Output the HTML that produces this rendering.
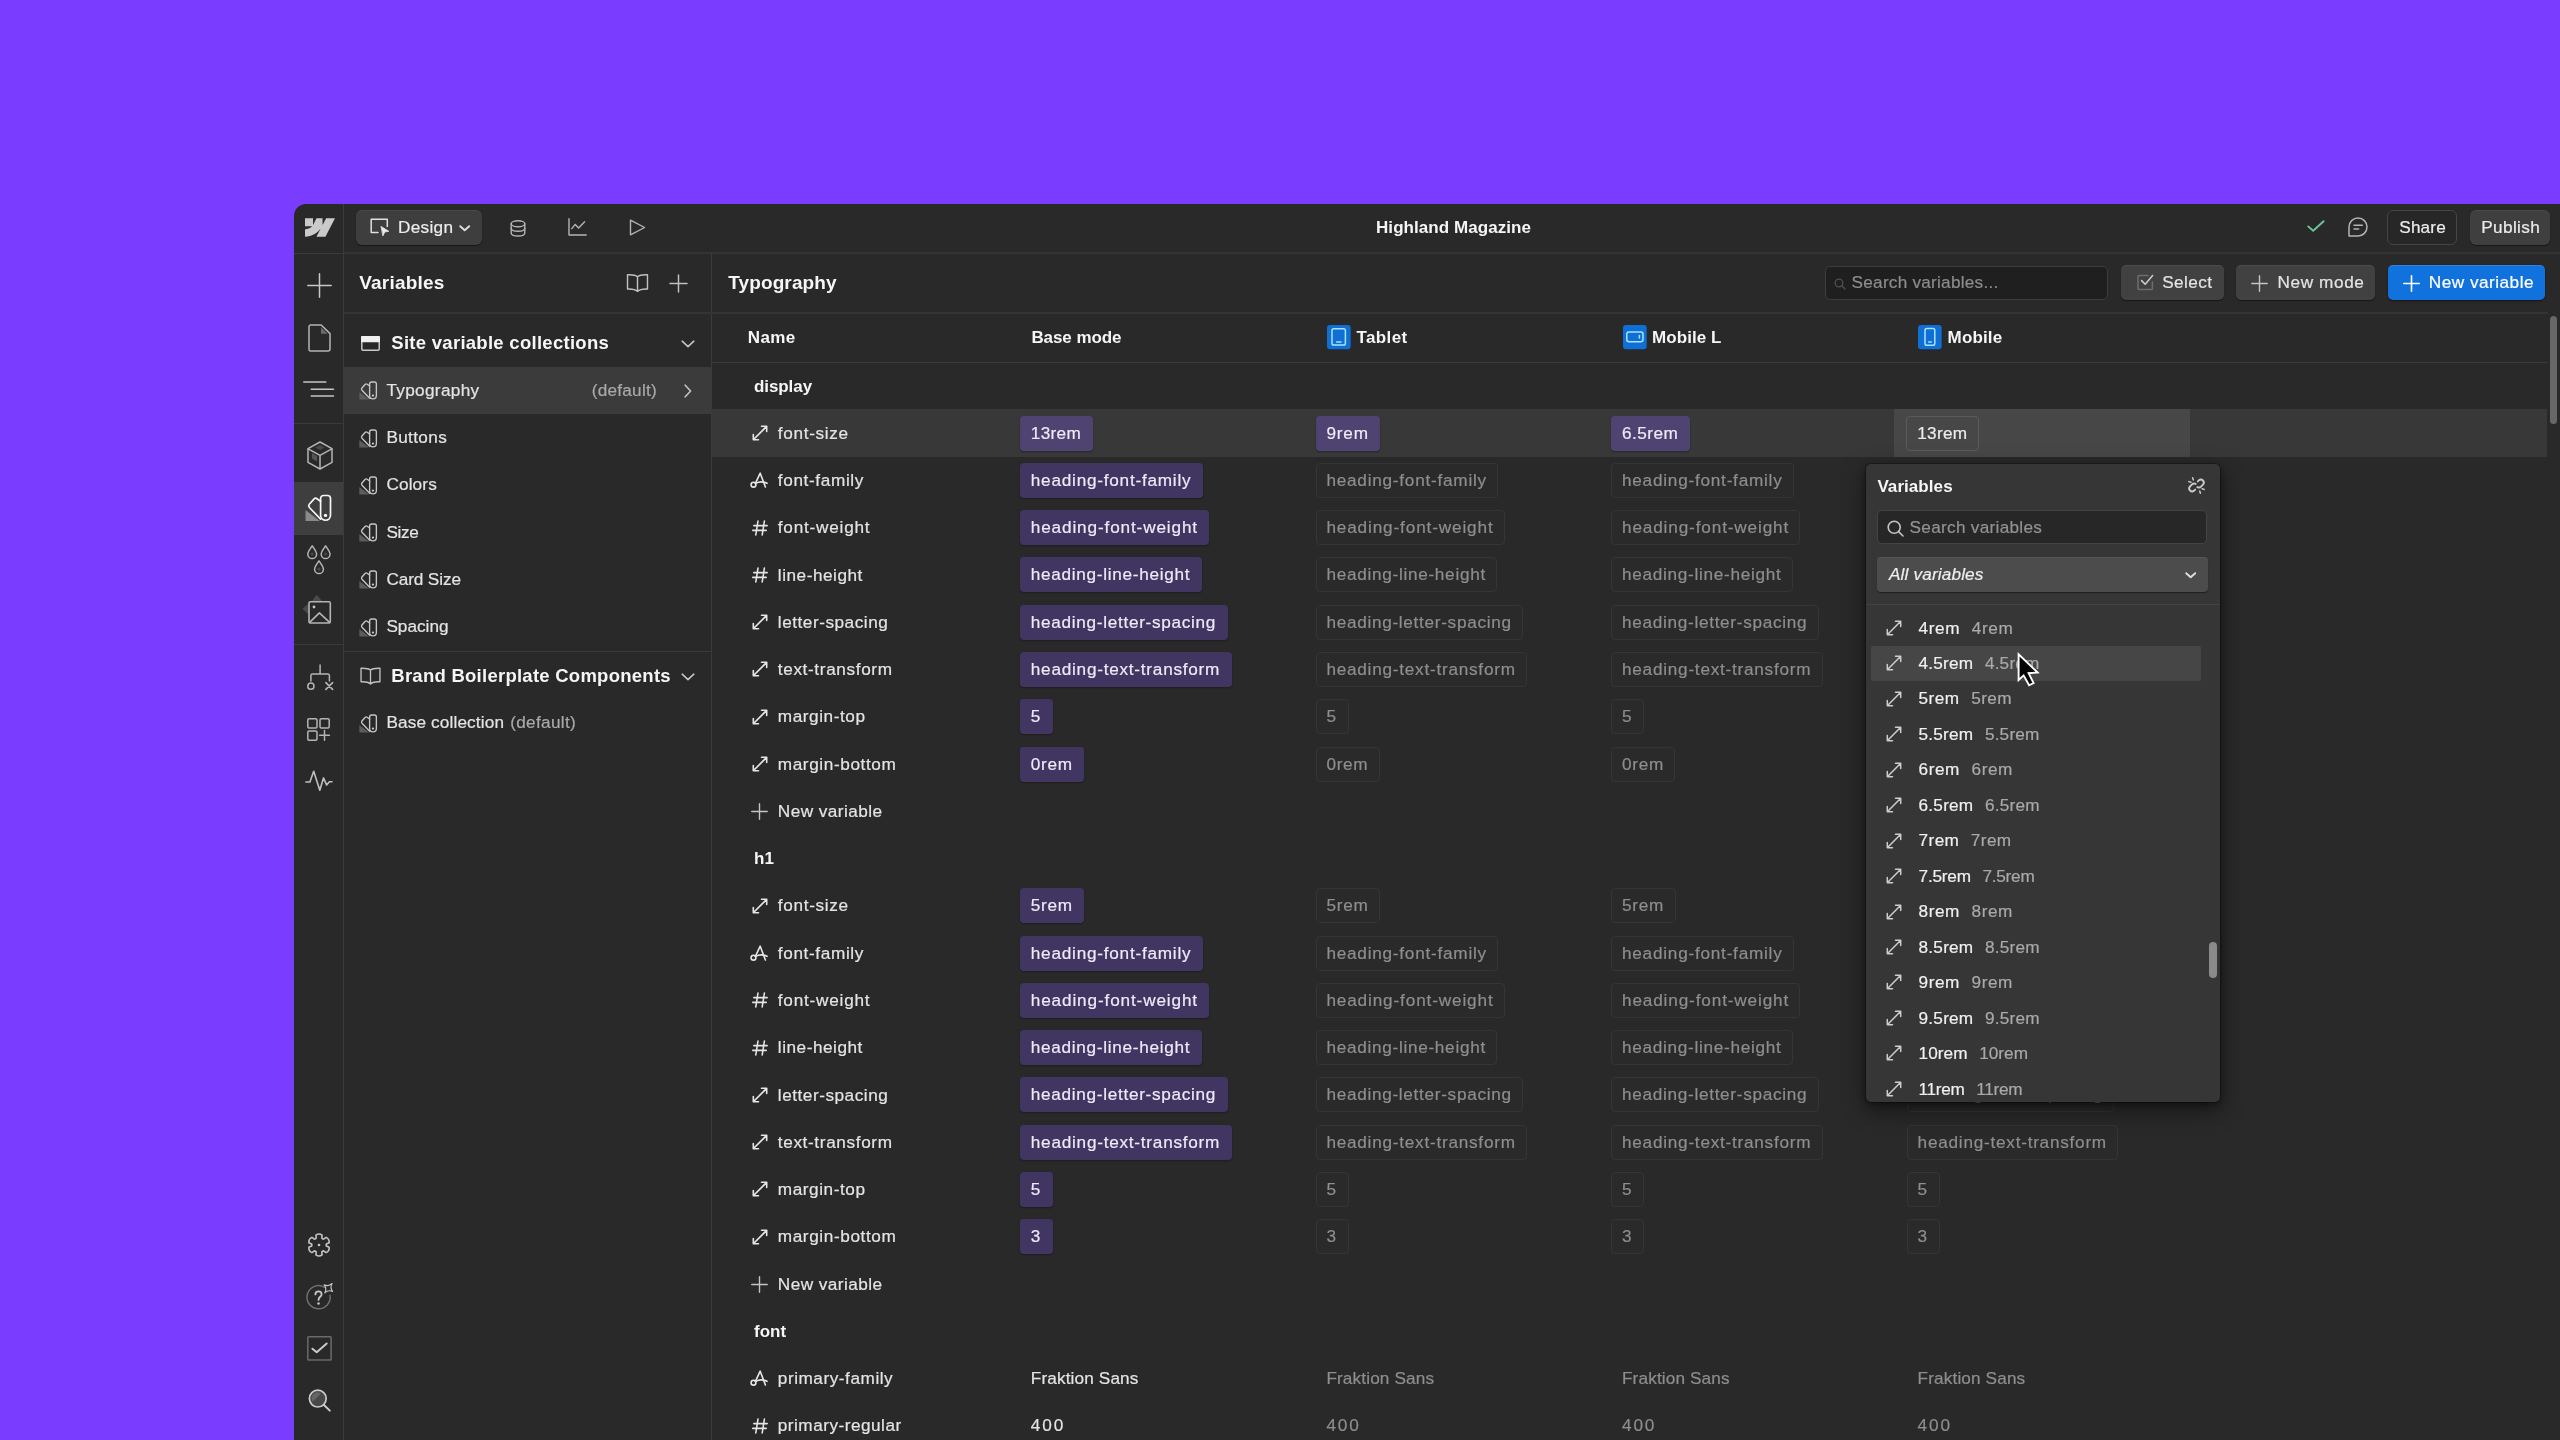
<!DOCTYPE html>
<html lang="en"><head><meta charset="utf-8"><title>Highland Magazine - Variables</title>
<style>
html,body{margin:0;padding:0;}
body{width:2560px;height:1440px;overflow:hidden;background:#7a3dff;font-family:"Liberation Sans",sans-serif;}
#app{position:absolute;left:0;top:0;width:2560px;height:1440px;overflow:hidden;will-change:transform;}
#win{position:absolute;left:294px;top:204px;width:2266px;height:1236px;background:#292929;border-top-left-radius:12px;}
.t{position:absolute;height:30px;line-height:30px;white-space:nowrap;color:#e4e4e4;font-size:17.2px;letter-spacing:.3px;-webkit-text-stroke:.2px currentColor;}
.b{font-weight:bold;color:#f6f6f6;letter-spacing:0;font-size:17px;-webkit-text-stroke:0;}
.h1{font-size:19px;}
.h2{font-size:18.5px;}
.dim{color:#a9a9a9;}
.ic{position:absolute;}
.ic svg{display:block;width:100%;height:100%;overflow:visible;}
.hl{position:absolute;background:#3b3b3b;height:1px;}
.vl{position:absolute;background:#3b3b3b;width:1px;}
.chip,.ghost,.plain{position:absolute;height:35px;line-height:34.6px;border-radius:4px;font-size:17.2px;-webkit-text-stroke:.2px currentColor;white-space:nowrap;box-sizing:border-box;padding-left:10.8px;letter-spacing:.5px;}
.chip{background:#413662;color:#efeaf9;box-shadow:0 1px 2px rgba(0,0,0,.3);}
.chip.hot{background:#4f4471;}
.ghost{border:1px solid #353535;line-height:32.6px;padding-left:9.8px;color:#8e8e8e;background:#2a2a2a;}
.plain{color:#e4e4e4;}
.plain.dimv{color:#8e8e8e;}
.btn{position:absolute;box-sizing:border-box;border-radius:5px;background:#414141;box-shadow:0 1px 1px rgba(0,0,0,.45), inset 0 1px 0 rgba(255,255,255,.06);}
.pv{margin-left:11.6px;}

</style></head><body>
<div id="app">
<div id="win"></div>
<div class="hl" style="position:absolute;left:344.0px;top:252.0px;width:2216.0px;height:2.0px;background:#343434;"></div>
<div class="hl" style="position:absolute;left:294.0px;top:253.0px;width:50.0px;height:1.0px;"></div>
<div class="vl" style="position:absolute;left:343.0px;top:204.0px;width:1.0px;height:1236.0px;"></div>
<div class="vl" style="position:absolute;left:711.0px;top:253.0px;width:1.0px;height:1187.0px;"></div>
<div class="hl" style="position:absolute;left:344.0px;top:312.0px;width:2204.0px;height:2.0px;background:#343434;"></div>
<div class="hl" style="position:absolute;left:712.0px;top:362.0px;width:1835.0px;height:1.0px;"></div>
<div class="hl" style="position:absolute;left:294.0px;top:423.0px;width:49.0px;height:1.0px;"></div>
<div class="hl" style="position:absolute;left:294.0px;top:644.0px;width:49.0px;height:1.0px;"></div>
<div class="hl" style="position:absolute;left:344.0px;top:650.5px;width:367.0px;height:1.0px;"></div>
<div class="ic" style="left:305.0px;top:218.0px;width:30px;height:19px;"><svg viewBox="0 0 1080 674"><path fill="#cacaca" d="M1080 0L735.386 673.684H411.695L555.916 394.481H549.445C430.464 548.934 252.942 650.61 0 673.684V398.344C0 398.344 161.813 388.787 256.938 288.776H0V0.005H288.771V237.515L295.252 237.488L413.254 0.005H631.644V236.009L638.125 235.999L760.555 0H1080Z"/></svg></div>
<div class="btn" style="position:absolute;left:356.0px;top:210.0px;width:126.0px;height:35.0px;background:#3e3e3e;border-radius:6px;"></div>
<div class="ic" style="left:370.0px;top:218.0px;width:20px;height:18px;"><svg viewBox="0 0 20 18" fill="none" stroke="#e0e0e0" stroke-width="1.5" stroke-linecap="round" stroke-linejoin="round"><path d="M8 14.5H1.2V1.2H17.3V8.5"/><path d="M11.3 8.6L18.8 13.3 14.8 14 13 17.6Z" fill="#e9e9e9" stroke="#e9e9e9" stroke-width="0.8"/></svg></div>
<div class="t " id="tDesign" style="left:398.0px;top:211.7px;letter-spacing:0.297px;color:#ececec;">Design</div>
<div class="ic" style="left:459.3px;top:225.3px;width:11.4px;height:6.6px;"><svg viewBox="0 0 11.4 6.6" fill="none" stroke="#dedede" stroke-width="1.9" stroke-linecap="round" stroke-linejoin="round"><path d="M1.2 1.2L5.7 5.2 10.2 1.2"/></svg></div>
<div class="ic" style="left:510.3px;top:219.7px;width:16px;height:17px;"><svg viewBox="0 0 16 17" fill="none" stroke="#b4b4b4" stroke-width="1.4" stroke-linecap="round" stroke-linejoin="round"><ellipse cx="8" cy="3.8" rx="6.8" ry="3"/><path d="M1.2 3.8V13c0 1.7 3 3 6.8 3s6.8-1.3 6.8-3V3.8"/><path d="M1.2 8.3c0 1.7 3 3 6.8 3s6.8-1.3 6.8-3"/><path d="M1.2 12c0 .3 0 .6 .2 .9M14.8 12c0 .3 0 .6-.2 .9" stroke="none"/></svg></div>
<div class="ic" style="left:567.5px;top:218.2px;width:19px;height:18px;"><svg viewBox="0 0 19 18" fill="none" stroke="#b4b4b4" stroke-width="1.4" stroke-linecap="round" stroke-linejoin="round"><path d="M1 .8V17H18.2"/><path d="M3.8 10.6L7.2 6.4 10.6 10 16.6 3.8"/></svg></div>
<div class="ic" style="left:628.8px;top:219.3px;width:17px;height:17px;"><svg viewBox="0 0 17 17" fill="none" stroke="#b4b4b4" stroke-width="1.4" stroke-linecap="round" stroke-linejoin="round"><path d="M1.5 1.2L15.6 8.5 1.5 15.8Z"/></svg></div>
<div class="t b" id="tTitle" style="left:1376.0px;top:212.5px;letter-spacing:0.064px;">Highland Magazine</div>
<div class="ic" style="left:2307.4px;top:220.4px;width:18px;height:12px;"><svg viewBox="0 0 18 12" fill="none" stroke="#67c79a" stroke-width="1.9" stroke-linecap="round" stroke-linejoin="round"><path d="M1.2 6.4L6.2 10.8 16.6 1.2"/></svg></div>
<div class="ic" style="left:2347.6px;top:216.6px;width:20px;height:20px;"><svg viewBox="0 0 20 20" fill="none" stroke="#b4b4b4" stroke-width="1.5" stroke-linecap="round" stroke-linejoin="round"><path d="M1 19V10A9 9 0 1 1 10 19Z"/><path d="M6 8.2H14.4M6 12H10.6"/></svg></div>
<div class="" style="position:absolute;left:2387.0px;top:210.0px;width:70.0px;height:35.0px;box-sizing:border-box;border:1px solid #454545;border-radius:6px;background:#272727;"></div>
<div class="t " id="tShare" style="left:2399.3px;top:211.7px;letter-spacing:0.131px;color:#ececec;">Share</div>
<div class="btn" style="position:absolute;left:2470.0px;top:210.0px;width:80.0px;height:35.0px;border-radius:6px;background:#3f3f3f;"></div>
<div class="t " id="tPublish" style="left:2481.3px;top:211.7px;letter-spacing:0.354px;color:#ececec;">Publish</div>
<div class="ic" style="left:307.0px;top:273.0px;width:25px;height:25px;"><svg viewBox="0 0 25 25" fill="none" stroke="#c8c8c8" stroke-width="1.5" stroke-linecap="round" stroke-linejoin="round"><path d="M12.5 .8V24.2M.8 12.5H24.2"/></svg></div>
<div class="ic" style="left:308.0px;top:323.8px;width:23px;height:28px;"><svg viewBox="0 0 23 28" fill="none" stroke="#b4b4b4" stroke-width="1.5" stroke-linecap="round" stroke-linejoin="round"><path d="M2.6 1H13.2L22 9.6V25a2 2 0 0 1-2 2H2.6a1.6 1.6 0 0 1-1.6-1.6V2.6A1.6 1.6 0 0 1 2.6 1Z"/><path d="M13 3.2L19.6 9.8H13Z" fill="#6a6a6a" stroke="none"/></svg></div>
<div class="ic" style="left:303.3px;top:381.0px;width:32px;height:16px;"><svg viewBox="0 0 32 16" fill="none" stroke="#c4c4c4" stroke-width="1.5" stroke-linecap="round" stroke-linejoin="round"><path d="M.8 1H22.8M8.2 8.2H30.5M8.2 15H30.5"/></svg></div>
<div class="ic" style="left:306.5px;top:441.3px;width:26px;height:29px;"><svg viewBox="0 0 26 29" fill="none" stroke="#b4b4b4" stroke-width="1.5" stroke-linecap="round" stroke-linejoin="round"><path d="M13 1L25 7.6V21.4L13 28 1 21.4V7.6Z"/><path d="M1.2 7.8L13 14.4 24.8 7.8M13 14.4V27.8"/><path d="M5 12L10 15V20.5L5 17.6Z" fill="#555" stroke="none"/><path d="M8.2 6.6L13 4 17.6 6.6 13 9Z" fill="#4a4a4a" stroke="none"/></svg></div>
<div class="" style="position:absolute;left:294.0px;top:481.5px;width:49.0px;height:53.0px;background:#3e3e3e;"></div>
<div class="ic" style="left:304.5px;top:494.0px;width:27px;height:28px;"><svg viewBox="0 0 27 28" fill="none" stroke="#f6f6f6" stroke-width="1.7" stroke-linecap="round" stroke-linejoin="round"><path d="M.5 16L.5 27H14.8Z" fill="#8a8a8a" stroke="none"/><path d="M15.6 7.4L12 4.7Q10.3 3.5 8.9 5.1L4.3 10.3Q3 11.9 4.4 13.5L15.6 25.2"/><path d="M18.6 1.5H22.5A3 3 0 0 1 25.5 4.5V21.3A4.95 4.95 0 0 1 15.6 21.3V4.5A3 3 0 0 1 18.6 1.5Z"/><circle cx="20.5" cy="21.4" r="1.7" fill="#f6f6f6" stroke="none"/></svg></div>
<div class="ic" style="left:307.0px;top:545.3px;width:24px;height:29px;"><svg viewBox="0 0 24 29" fill="none" stroke="#b4b4b4" stroke-width="1.5" stroke-linecap="round" stroke-linejoin="round"><path d="M5.2 0.8C6.800000000000001 3.4 9.600000000000001 6.4 9.600000000000001 9.2A4.4 4.4 0 0 1 0.7999999999999998 9.2C0.7999999999999998 6.4 3.6 3.4 5.2 0.8Z"/><circle cx="5.2" cy="9" r="1.6" fill="#4a4a4a" stroke="none"/><path d="M18.6 0.8C20.200000000000003 3.4 23.0 6.4 23.0 9.2A4.4 4.4 0 0 1 14.200000000000001 9.2C14.200000000000001 6.4 17.0 3.4 18.6 0.8Z"/><circle cx="18.6" cy="9" r="1.6" fill="#4a4a4a" stroke="none"/><path d="M12.0 15.8C13.6 18.4 16.4 21.4 16.4 24.2A4.4 4.4 0 0 1 7.6 24.2C7.6 21.4 10.4 18.4 12.0 15.8Z"/><circle cx="12.0" cy="24" r="1.6" fill="#4a4a4a" stroke="none"/></svg></div>
<div class="ic" style="left:301.0px;top:594.0px;width:31px;height:30.5px;"><svg viewBox="0 0 31 30.5" fill="none" stroke="#b4b4b4" stroke-width="1.6" stroke-linecap="round" stroke-linejoin="round"><path d="M15.7 .7L21 7H11Z" fill="#4a4a4a" stroke="none"/><path d="M1.3 14.7L7 10V20Z" fill="#4a4a4a" stroke="none"/><rect x="8" y="7.7" width="21.3" height="21.3" rx="1.4" fill="#292929"/><circle cx="13" cy="13" r="1.4" fill="#c4c4c4" stroke="none"/><path d="M8.6 28.4L18.4 18.9 28.6 28.4"/></svg></div>
<div class="ic" style="left:305.5px;top:663.5px;width:28px;height:27px;"><svg viewBox="0 0 28 27" fill="none" stroke="#b4b4b4" stroke-width="1.5" stroke-linecap="round" stroke-linejoin="round"><path d="M14.1 .9V10.1M4.9 17V11.6A1.5 1.5 0 0 1 6.4 10.1H21.9A1.5 1.5 0 0 1 23.4 11.6V17"/><circle cx="4.9" cy="22.2" r="3.1"/><path d="M19.9 18.6L26.6 25.3M26.6 18.6L19.9 25.3" stroke-width="1.7"/></svg></div>
<div class="ic" style="left:306.6px;top:717.6px;width:23px;height:23px;"><svg viewBox="0 0 23 23" fill="none" stroke="#b4b4b4" stroke-width="1.5" stroke-linecap="round" stroke-linejoin="round"><rect x=".8" y=".8" width="9.2" height="9.2" rx="1.2"/><rect x="13" y=".8" width="9.2" height="9.2" rx="1.2"/><rect x=".8" y="13" width="9.2" height="9.2" rx="1.2"/><path d="M17.5 12.4V22.2M12.6 17.3H22.4"/></svg></div>
<div class="ic" style="left:305.0px;top:770.0px;width:28px;height:21.5px;"><svg viewBox="0 0 28 21.5" fill="none" stroke="#c0c0c0" stroke-width="1.6" stroke-linecap="round" stroke-linejoin="round"><path d="M.9 12H4.9L8.7 1.3 14.8 20.2 18.5 7.9 21.6 15 24.4 11.7H27"/></svg></div>
<div class="ic" style="left:307.0px;top:1232.2px;width:24px;height:26px;"><svg viewBox="0 0 24 26" fill="none" stroke="#c4c4c4" stroke-width="1.6" stroke-linecap="round" stroke-linejoin="round"><path d="M8.92 3.05Q12.00 0.90 15.08 3.05L14.79 6.09Q15.45 7.02 16.59 7.13L19.08 5.36Q22.48 6.95 22.16 10.69L19.38 11.96Q18.90 13.00 19.38 14.04L22.16 15.31Q22.48 19.05 19.08 20.64L16.59 18.87Q15.45 18.98 14.79 19.91L15.08 22.95Q12.00 25.10 8.92 22.95L9.21 19.91Q8.55 18.98 7.41 18.87L4.92 20.64Q1.52 19.05 1.84 15.31L4.62 14.04Q5.10 13.00 4.62 11.96L1.84 10.69Q1.52 6.95 4.92 5.36L7.41 7.13Q8.55 7.02 9.21 6.09Z"/><circle cx="12" cy="13" r="1.3" fill="#c4c4c4" stroke="none"/></svg></div>
<div class="ic" style="left:304.8px;top:1281.0px;width:31px;height:30px;"><svg viewBox="0 0 31 30" fill="none" stroke="#b4b4b4" stroke-width="1.5" stroke-linecap="round" stroke-linejoin="round"><path d="M19.6 6.3A11.6 11.6 0 1 0 25 14.2" stroke="#6e6e6e"/><path d="M23.4 1.2Q24 6 28.8 7.2Q24 8.4 23.4 13.2Q22.8 8.4 18 7.2Q22.8 6 23.4 1.2Z" fill="#292929" stroke="#c8c8c8" stroke-width="1.1" transform="rotate(38 23.4 7.2)"/><path d="M10.4 13.4C10.4 9.2 16.6 9.4 16.6 13.2 16.6 15.8 13.5 15.8 13.5 18.9" stroke="#c8c8c8" stroke-width="1.8"/><circle cx="13.5" cy="22.6" r="1.25" fill="#c8c8c8" stroke="none"/></svg></div>
<div class="ic" style="left:306.6px;top:1336.0px;width:25px;height:25px;"><svg viewBox="0 0 25 25" fill="none" stroke="#b4b4b4" stroke-width="1.5" stroke-linecap="round" stroke-linejoin="round"><rect x=".8" y=".8" width="23.3" height="23.3" rx=".8" stroke="#6a6a6a"/><path d="M5.4 12.7L9.7 16.3 19.7 7.5" stroke="#cdcdcd" stroke-width="1.9"/></svg></div>
<div class="ic" style="left:307.5px;top:1389.4px;width:24px;height:24px;"><svg viewBox="0 0 24 24" fill="none" stroke="#cccccc" stroke-width="1.7" stroke-linecap="round" stroke-linejoin="round"><circle cx="9.8" cy="9.6" r="8.4" fill="#484848"/><path d="M3.5 9.6A6.3 6.3 0 0 1 9.8 3.3L13 4.4 4.6 12.8Z" fill="#666" stroke="none"/><path d="M16 16L21.8 21.6" stroke-width="2"/></svg></div>
<div class="t b h1" id="tVars" style="left:359.2px;top:268.0px;letter-spacing:0.206px;">Variables</div>
<div class="ic" style="left:625.9px;top:273.4px;width:23px;height:20px;transform:scale(.95);"><svg viewBox="0 0 23 20" fill="none" stroke="#c0c0c0" stroke-width="1.5" stroke-linecap="round" stroke-linejoin="round"><path d="M11.5 3.4C9.4 1.6 6 1.2 1 1.4V16.4C6 16.2 9.4 16.8 11.5 18.8 13.6 16.8 17 16.2 22 16.4V1.4C17 1.2 13.6 1.6 11.5 3.4ZM11.5 3.4V18.6"/></svg></div>
<div class="ic" style="left:669.1px;top:273.5px;width:19px;height:19px;"><svg viewBox="0 0 19 19" fill="none" stroke="#c0c0c0" stroke-width="1.5" stroke-linecap="round" stroke-linejoin="round"><path d="M9.5 1V18M1 9.5H18"/></svg></div>
<div class="ic" style="left:361.2px;top:335.6px;width:19px;height:15px;"><svg viewBox="0 0 19 15" fill="none" stroke="#c8c8c8" stroke-width="1.5" stroke-linecap="round" stroke-linejoin="round"><rect x=".8" y=".8" width="17.4" height="13.4" rx="1.2"/><rect x=".8" y=".8" width="17.4" height="4.6" fill="#f0f0f0" stroke="#f0f0f0"/></svg></div>
<div class="t b h2" id="tSite" style="left:391.3px;top:328.4px;letter-spacing:0.280px;">Site variable collections</div>
<div class="ic" style="left:680.6px;top:339.8px;width:14px;height:8px;"><svg viewBox="0 0 14 8" fill="none" stroke="#c4c4c4" stroke-width="1.6" stroke-linecap="round" stroke-linejoin="round"><path d="M1.2 1.2L7 6.6 12.8 1.2"/></svg></div>
<div class="" style="position:absolute;left:344.0px;top:366.5px;width:367.0px;height:47.4px;background:#3b3b3b;"></div>
<div class="ic" style="left:359.0px;top:381.2px;width:18.4px;height:19.1px;"><svg viewBox="0 0 27 28" fill="none" stroke="#c6c6c6" stroke-width="2.0" stroke-linecap="round" stroke-linejoin="round"><path d="M.5 16L.5 27H14.8Z" fill="#5c5c5c" stroke="none"/><path d="M15.6 7.4L12 4.7Q10.3 3.5 8.9 5.1L4.3 10.3Q3 11.9 4.4 13.5L15.6 25.2"/><path d="M18.6 1.5H22.5A3 3 0 0 1 25.5 4.5V21.3A4.95 4.95 0 0 1 15.6 21.3V4.5A3 3 0 0 1 18.6 1.5Z"/><circle cx="20.5" cy="21.4" r="1.7" fill="#c6c6c6" stroke="none"/></svg></div>
<div class="t " id="tL0" style="left:386.4px;top:374.8px;letter-spacing:0.330px;">Typography</div>
<div class="ic" style="left:359.0px;top:428.5px;width:18.4px;height:19.1px;"><svg viewBox="0 0 27 28" fill="none" stroke="#c6c6c6" stroke-width="2.0" stroke-linecap="round" stroke-linejoin="round"><path d="M.5 16L.5 27H14.8Z" fill="#5c5c5c" stroke="none"/><path d="M15.6 7.4L12 4.7Q10.3 3.5 8.9 5.1L4.3 10.3Q3 11.9 4.4 13.5L15.6 25.2"/><path d="M18.6 1.5H22.5A3 3 0 0 1 25.5 4.5V21.3A4.95 4.95 0 0 1 15.6 21.3V4.5A3 3 0 0 1 18.6 1.5Z"/><circle cx="20.5" cy="21.4" r="1.7" fill="#c6c6c6" stroke="none"/></svg></div>
<div class="t " id="tL1" style="left:386.4px;top:422.1px;letter-spacing:0.351px;">Buttons</div>
<div class="ic" style="left:359.0px;top:475.8px;width:18.4px;height:19.1px;"><svg viewBox="0 0 27 28" fill="none" stroke="#c6c6c6" stroke-width="2.0" stroke-linecap="round" stroke-linejoin="round"><path d="M.5 16L.5 27H14.8Z" fill="#5c5c5c" stroke="none"/><path d="M15.6 7.4L12 4.7Q10.3 3.5 8.9 5.1L4.3 10.3Q3 11.9 4.4 13.5L15.6 25.2"/><path d="M18.6 1.5H22.5A3 3 0 0 1 25.5 4.5V21.3A4.95 4.95 0 0 1 15.6 21.3V4.5A3 3 0 0 1 18.6 1.5Z"/><circle cx="20.5" cy="21.4" r="1.7" fill="#c6c6c6" stroke="none"/></svg></div>
<div class="t " id="tL2" style="left:386.4px;top:469.3px;letter-spacing:0.146px;">Colors</div>
<div class="ic" style="left:359.0px;top:523.1px;width:18.4px;height:19.1px;"><svg viewBox="0 0 27 28" fill="none" stroke="#c6c6c6" stroke-width="2.0" stroke-linecap="round" stroke-linejoin="round"><path d="M.5 16L.5 27H14.8Z" fill="#5c5c5c" stroke="none"/><path d="M15.6 7.4L12 4.7Q10.3 3.5 8.9 5.1L4.3 10.3Q3 11.9 4.4 13.5L15.6 25.2"/><path d="M18.6 1.5H22.5A3 3 0 0 1 25.5 4.5V21.3A4.95 4.95 0 0 1 15.6 21.3V4.5A3 3 0 0 1 18.6 1.5Z"/><circle cx="20.5" cy="21.4" r="1.7" fill="#c6c6c6" stroke="none"/></svg></div>
<div class="t " id="tL3" style="left:386.4px;top:516.6px;letter-spacing:-0.346px;">Size</div>
<div class="ic" style="left:359.0px;top:570.3px;width:18.4px;height:19.1px;"><svg viewBox="0 0 27 28" fill="none" stroke="#c6c6c6" stroke-width="2.0" stroke-linecap="round" stroke-linejoin="round"><path d="M.5 16L.5 27H14.8Z" fill="#5c5c5c" stroke="none"/><path d="M15.6 7.4L12 4.7Q10.3 3.5 8.9 5.1L4.3 10.3Q3 11.9 4.4 13.5L15.6 25.2"/><path d="M18.6 1.5H22.5A3 3 0 0 1 25.5 4.5V21.3A4.95 4.95 0 0 1 15.6 21.3V4.5A3 3 0 0 1 18.6 1.5Z"/><circle cx="20.5" cy="21.4" r="1.7" fill="#c6c6c6" stroke="none"/></svg></div>
<div class="t " id="tL4" style="left:386.4px;top:563.9px;letter-spacing:-0.109px;">Card Size</div>
<div class="ic" style="left:359.0px;top:617.6px;width:18.4px;height:19.1px;"><svg viewBox="0 0 27 28" fill="none" stroke="#c6c6c6" stroke-width="2.0" stroke-linecap="round" stroke-linejoin="round"><path d="M.5 16L.5 27H14.8Z" fill="#5c5c5c" stroke="none"/><path d="M15.6 7.4L12 4.7Q10.3 3.5 8.9 5.1L4.3 10.3Q3 11.9 4.4 13.5L15.6 25.2"/><path d="M18.6 1.5H22.5A3 3 0 0 1 25.5 4.5V21.3A4.95 4.95 0 0 1 15.6 21.3V4.5A3 3 0 0 1 18.6 1.5Z"/><circle cx="20.5" cy="21.4" r="1.7" fill="#c6c6c6" stroke="none"/></svg></div>
<div class="t " id="tL5" style="left:386.4px;top:611.2px;letter-spacing:0.013px;">Spacing</div>
<div class="t dim" id="tDef" style="left:591.8px;top:374.8px;letter-spacing:0.230px;">(default)</div>
<div class="ic" style="left:684.0px;top:384.2px;width:8px;height:14px;"><svg viewBox="0 0 8 14" fill="none" stroke="#c4c4c4" stroke-width="1.6" stroke-linecap="round" stroke-linejoin="round"><path d="M1.2 1.2L6.6 7 1.2 12.8"/></svg></div>
<div class="ic" style="left:358.9px;top:665.9px;width:23px;height:20px;transform:scale(.9);"><svg viewBox="0 0 23 20" fill="none" stroke="#c0c0c0" stroke-width="1.5" stroke-linecap="round" stroke-linejoin="round"><path d="M11.5 3.4C9.4 1.6 6 1.2 1 1.4V16.4C6 16.2 9.4 16.8 11.5 18.8 13.6 16.8 17 16.2 22 16.4V1.4C17 1.2 13.6 1.6 11.5 3.4ZM11.5 3.4V18.6"/></svg></div>
<div class="t b h2" id="tBrand" style="left:391.3px;top:661.3px;letter-spacing:0.256px;">Brand Boilerplate Components</div>
<div class="ic" style="left:680.8px;top:672.6px;width:14px;height:8px;"><svg viewBox="0 0 14 8" fill="none" stroke="#c4c4c4" stroke-width="1.6" stroke-linecap="round" stroke-linejoin="round"><path d="M1.2 1.2L7 6.6 12.8 1.2"/></svg></div>
<div class="ic" style="left:359.0px;top:713.9px;width:18.4px;height:19.1px;"><svg viewBox="0 0 27 28" fill="none" stroke="#c6c6c6" stroke-width="2.0" stroke-linecap="round" stroke-linejoin="round"><path d="M.5 16L.5 27H14.8Z" fill="#5c5c5c" stroke="none"/><path d="M15.6 7.4L12 4.7Q10.3 3.5 8.9 5.1L4.3 10.3Q3 11.9 4.4 13.5L15.6 25.2"/><path d="M18.6 1.5H22.5A3 3 0 0 1 25.5 4.5V21.3A4.95 4.95 0 0 1 15.6 21.3V4.5A3 3 0 0 1 18.6 1.5Z"/><circle cx="20.5" cy="21.4" r="1.7" fill="#c6c6c6" stroke="none"/></svg></div>
<div class="t " id="tBase" style="left:386.4px;top:707.4px;"><span id="tBaseA" class="" style="letter-spacing:0.142px;">Base collection</span><span id="tBaseB" class="dim" style="letter-spacing:0.330px;margin-left:6px;">(default)</span></div>
<div class="t b h1" id="tTypo" style="left:728.2px;top:268.0px;letter-spacing:0.119px;">Typography</div>
<div class="" style="position:absolute;left:1825.0px;top:266.0px;width:283.0px;height:34.0px;box-sizing:border-box;border:1px solid #3d3d3d;border-radius:5px;background:#1f1f1f;"></div>
<div class="ic" style="left:1834.4px;top:278.0px;width:12px;height:12px;opacity:.75;"><svg viewBox="0 0 12 12" fill="none" stroke="#5e5e5e" stroke-width="1.3" stroke-linecap="round" stroke-linejoin="round"><circle cx="5" cy="5" r="3.8"/><path d="M7.8 7.8L11 11"/></svg></div>
<div class="t " id="tSearch" style="left:1851.6px;top:267.2px;letter-spacing:0.236px;color:#8c8c8c;">Search variables...</div>
<div class="btn" style="position:absolute;left:2121.0px;top:265.0px;width:103.0px;height:35.0px;"></div>
<div class="ic" style="left:2136.5px;top:273.7px;width:17px;height:17px;"><svg viewBox="0 0 17 17" fill="none" stroke="#b4b4b4" stroke-width="1.5" stroke-linecap="round" stroke-linejoin="round"><path d="M15.4 8V14.6a1 1 0 0 1-1 1H2a1 1 0 0 1-1-1V2.4a1 1 0 0 1 1-1H11" stroke="#6e6e6e"/><path d="M4.6 6.6L8.2 10.2 15.6 1.6" stroke="#cfcfcf"/></svg></div>
<div class="t " id="tSelect" style="left:2162.2px;top:267.2px;letter-spacing:0.424px;">Select</div>
<div class="btn" style="position:absolute;left:2236.0px;top:265.0px;width:139.0px;height:35.0px;"></div>
<div class="ic" style="left:2250.5px;top:274.7px;width:17px;height:17px;"><svg viewBox="0 0 17 17" fill="none" stroke="#c4c4c4" stroke-width="1.4" stroke-linecap="round" stroke-linejoin="round"><path d="M8.5 .8V16.2M.8 8.5H16.2"/></svg></div>
<div class="t " id="tNewMode" style="left:2277.6px;top:267.2px;letter-spacing:0.592px;">New mode</div>
<div class="btn" style="position:absolute;left:2388.0px;top:265.0px;width:157.0px;height:35.0px;background:#1272dd;box-shadow:0 1px 2px rgba(0,0,0,.5), inset 0 1px 0 rgba(255,255,255,.12);"></div>
<div class="ic" style="left:2402.9px;top:274.7px;width:17px;height:17px;"><svg viewBox="0 0 17 17" fill="none" stroke="#ffffff" stroke-width="1.6" stroke-linecap="round" stroke-linejoin="round"><path d="M8.5 .8V16.2M.8 8.5H16.2"/></svg></div>
<div class="t " id="tNewVar" style="left:2428.8px;top:267.2px;letter-spacing:0.486px;color:#ffffff;">New variable</div>
<div class="t b th" id="tName" style="left:747.8px;top:323.4px;letter-spacing:0.329px;">Name</div>
<div class="t b th" id="tBase0" style="left:1031.4px;top:323.4px;letter-spacing:-0.075px;">Base mode</div>
<div class="ic" style="left:1327.2px;top:325.4px;width:23.7px;height:24.3px;"><svg viewBox="0 0 23.7 24.3"><rect width="23.7" height="24.3" rx="3" fill="#0f6fd4"/><g fill="none" stroke="#a6e4ff" stroke-width="1.5" stroke-linecap="round" stroke-linejoin="round"><rect x="5" y="3.7" width="13.4" height="16.4" rx="1.8"/><path d="M9.6 17H14"/></g></svg></div>
<div class="t b th" id="tH0" style="left:1356.4px;top:323.4px;letter-spacing:0.397px;">Tablet</div>
<div class="ic" style="left:1622.8px;top:325.4px;width:23.7px;height:24.3px;"><svg viewBox="0 0 23.7 24.3"><rect width="23.7" height="24.3" rx="3" fill="#0f6fd4"/><g fill="none" stroke="#a6e4ff" stroke-width="1.5" stroke-linecap="round" stroke-linejoin="round"><rect x="3.8" y="6.9" width="16.2" height="9.9" rx="2.2"/><path d="M16.4 10.6V13"/></g></svg></div>
<div class="t b th" id="tH1" style="left:1652.0px;top:323.4px;letter-spacing:0.078px;">Mobile L</div>
<div class="ic" style="left:1918.4px;top:325.4px;width:23.7px;height:24.3px;"><svg viewBox="0 0 23.7 24.3"><rect width="23.7" height="24.3" rx="3" fill="#0f6fd4"/><g fill="none" stroke="#a6e4ff" stroke-width="1.5" stroke-linecap="round" stroke-linejoin="round"><rect x="7" y="3.6" width="9.8" height="16.6" rx="1.8"/><path d="M10.6 17H13.2"/></g></svg></div>
<div class="t b th" id="tH2" style="left:1947.6px;top:323.4px;letter-spacing:0.151px;">Mobile</div>
<div class="" style="position:absolute;left:2550.0px;top:316.0px;width:7.0px;height:108.0px;background:#676767;border-radius:4px;"></div>
<div class="" style="position:absolute;left:712.0px;top:409.4px;width:1835.0px;height:47.2px;background:#383838;"></div>
<div class="" style="position:absolute;left:1894.4px;top:409.4px;width:296.0px;height:47.2px;background:#474747;"></div>
<div class="t b th" id="g0" style="left:754.0px;top:371.7px;letter-spacing:-0.082px;">display</div>
<div class="ic" style="left:751.7px;top:425.1px;width:16px;height:16px;"><svg viewBox="0 0 16 16" fill="none" stroke="#e6e6e6" stroke-width="1.6" stroke-linecap="round" stroke-linejoin="round"><path d="M1.3 14.7L14.7 1.3M9.5 1.3H14.7V6.5M1.3 9.5V14.7H6.5"/></svg></div>
<div class="t " id="r1" style="left:777.8px;top:417.7px;letter-spacing:0.666px;">font-size</div>
<div class="chip hot" id="c1_0" style="left:1020.0px;top:415.6px;width:72.9px;"><span id="c1_0t" class="" style="letter-spacing:0.295px;">13rem</span></div>
<div class="chip hot" id="c1_1" style="left:1315.6px;top:415.6px;width:64.6px;"><span id="c1_1t" class="" style="letter-spacing:0.809px;">9rem</span></div>
<div class="chip hot" id="c1_2" style="left:1611.2px;top:415.6px;width:78.9px;"><span id="c1_2t" class="" style="letter-spacing:0.480px;">6.5rem</span></div>
<div class="ghost" id="c1_3" style="left:1906.4px;top:415.6px;width:72.9px;background:transparent;border-color:#5b5b5b;color:#ececec;"><span id="c1_3t" class="" style="letter-spacing:0.295px;">13rem</span></div>
<div class="ic" style="left:750.3px;top:472.0px;width:18px;height:16px;"><svg viewBox="0 0 18 16" fill="none" stroke="#e6e6e6" stroke-width="1.6" stroke-linecap="round" stroke-linejoin="round"><path d="M5.3 11.6L10.2 1.2 15.4 15"/><circle cx="3.5" cy="12.7" r="2.4"/><path d="M5.7 11.4C8.6 9.7 13.4 9.5 17 11.3"/></svg></div>
<div class="t " id="r2" style="left:777.8px;top:464.9px;letter-spacing:0.632px;">font-family</div>
<div class="chip" id="c2_0" style="left:1020.0px;top:462.8px;width:182.8px;"><span id="c2_0t" class="" style="letter-spacing:0.757px;">heading-font-family</span></div>
<div class="ghost" id="c2_1" style="left:1315.6px;top:462.8px;width:182.8px;"><span id="c2_1t" class="" style="letter-spacing:0.757px;">heading-font-family</span></div>
<div class="ghost" id="c2_2" style="left:1611.2px;top:462.8px;width:182.8px;"><span id="c2_2t" class="" style="letter-spacing:0.757px;">heading-font-family</span></div>
<div class="ic" style="left:752.1px;top:519.6px;width:16px;height:16px;"><svg viewBox="0 0 16 16" fill="none" stroke="#e6e6e6" stroke-width="1.6" stroke-linecap="round" stroke-linejoin="round"><path d="M6 1L3.8 15M12.4 1L10.2 15M1.8 5.6H15.2M.8 10.4H14.2"/></svg></div>
<div class="t " id="r3" style="left:777.8px;top:512.2px;letter-spacing:0.777px;">font-weight</div>
<div class="chip" id="c3_0" style="left:1020.0px;top:510.1px;width:189.3px;"><span id="c3_0t" class="" style="letter-spacing:0.851px;">heading-font-weight</span></div>
<div class="ghost" id="c3_1" style="left:1315.6px;top:510.1px;width:189.3px;"><span id="c3_1t" class="" style="letter-spacing:0.851px;">heading-font-weight</span></div>
<div class="ghost" id="c3_2" style="left:1611.2px;top:510.1px;width:189.3px;"><span id="c3_2t" class="" style="letter-spacing:0.851px;">heading-font-weight</span></div>
<div class="ic" style="left:752.1px;top:566.9px;width:16px;height:16px;"><svg viewBox="0 0 16 16" fill="none" stroke="#e6e6e6" stroke-width="1.6" stroke-linecap="round" stroke-linejoin="round"><path d="M6 1L3.8 15M12.4 1L10.2 15M1.8 5.6H15.2M.8 10.4H14.2"/></svg></div>
<div class="t " id="r4" style="left:777.8px;top:559.5px;letter-spacing:0.529px;">line-height</div>
<div class="chip" id="c4_0" style="left:1020.0px;top:557.4px;width:181.8px;"><span id="c4_0t" class="" style="letter-spacing:0.700px;">heading-line-height</span></div>
<div class="ghost" id="c4_1" style="left:1315.6px;top:557.4px;width:181.8px;"><span id="c4_1t" class="" style="letter-spacing:0.700px;">heading-line-height</span></div>
<div class="ghost" id="c4_2" style="left:1611.2px;top:557.4px;width:181.8px;"><span id="c4_2t" class="" style="letter-spacing:0.700px;">heading-line-height</span></div>
<div class="ic" style="left:751.7px;top:614.1px;width:16px;height:16px;"><svg viewBox="0 0 16 16" fill="none" stroke="#e6e6e6" stroke-width="1.6" stroke-linecap="round" stroke-linejoin="round"><path d="M1.3 14.7L14.7 1.3M9.5 1.3H14.7V6.5M1.3 9.5V14.7H6.5"/></svg></div>
<div class="t " id="r5" style="left:777.8px;top:606.8px;letter-spacing:0.524px;">letter-spacing</div>
<div class="chip" id="c5_0" style="left:1020.0px;top:604.6px;width:207.6px;"><span id="c5_0t" class="" style="letter-spacing:0.692px;">heading-letter-spacing</span></div>
<div class="ghost" id="c5_1" style="left:1315.6px;top:604.6px;width:207.6px;"><span id="c5_1t" class="" style="letter-spacing:0.692px;">heading-letter-spacing</span></div>
<div class="ghost" id="c5_2" style="left:1611.2px;top:604.6px;width:207.6px;"><span id="c5_2t" class="" style="letter-spacing:0.692px;">heading-letter-spacing</span></div>
<div class="ic" style="left:751.7px;top:661.4px;width:16px;height:16px;"><svg viewBox="0 0 16 16" fill="none" stroke="#e6e6e6" stroke-width="1.6" stroke-linecap="round" stroke-linejoin="round"><path d="M1.3 14.7L14.7 1.3M9.5 1.3H14.7V6.5M1.3 9.5V14.7H6.5"/></svg></div>
<div class="t " id="r6" style="left:777.8px;top:654.0px;letter-spacing:0.630px;">text-transform</div>
<div class="chip" id="c6_0" style="left:1020.0px;top:651.9px;width:211.6px;"><span id="c6_0t" class="" style="letter-spacing:0.747px;">heading-text-transform</span></div>
<div class="ghost" id="c6_1" style="left:1315.6px;top:651.9px;width:211.6px;"><span id="c6_1t" class="" style="letter-spacing:0.747px;">heading-text-transform</span></div>
<div class="ghost" id="c6_2" style="left:1611.2px;top:651.9px;width:211.6px;"><span id="c6_2t" class="" style="letter-spacing:0.747px;">heading-text-transform</span></div>
<div class="ic" style="left:751.7px;top:708.7px;width:16px;height:16px;"><svg viewBox="0 0 16 16" fill="none" stroke="#e6e6e6" stroke-width="1.6" stroke-linecap="round" stroke-linejoin="round"><path d="M1.3 14.7L14.7 1.3M9.5 1.3H14.7V6.5M1.3 9.5V14.7H6.5"/></svg></div>
<div class="t " id="r7" style="left:777.8px;top:701.3px;letter-spacing:0.560px;">margin-top</div>
<div class="chip" id="c7_0" style="left:1020.0px;top:699.2px;width:33.1px;"><span id="c7_0t" class="" style="letter-spacing:0px;">5</span></div>
<div class="ghost" id="c7_1" style="left:1315.6px;top:699.2px;width:33.1px;"><span id="c7_1t" class="" style="letter-spacing:0px;">5</span></div>
<div class="ghost" id="c7_2" style="left:1611.2px;top:699.2px;width:33.1px;"><span id="c7_2t" class="" style="letter-spacing:0px;">5</span></div>
<div class="ic" style="left:751.7px;top:756.0px;width:16px;height:16px;"><svg viewBox="0 0 16 16" fill="none" stroke="#e6e6e6" stroke-width="1.6" stroke-linecap="round" stroke-linejoin="round"><path d="M1.3 14.7L14.7 1.3M9.5 1.3H14.7V6.5M1.3 9.5V14.7H6.5"/></svg></div>
<div class="t " id="r8" style="left:777.8px;top:748.6px;letter-spacing:0.599px;">margin-bottom</div>
<div class="chip" id="c8_0" style="left:1020.0px;top:746.5px;width:64.3px;"><span id="c8_0t" class="" style="letter-spacing:0.709px;">0rem</span></div>
<div class="ghost" id="c8_1" style="left:1315.6px;top:746.5px;width:64.3px;"><span id="c8_1t" class="" style="letter-spacing:0.709px;">0rem</span></div>
<div class="ghost" id="c8_2" style="left:1611.2px;top:746.5px;width:64.3px;"><span id="c8_2t" class="" style="letter-spacing:0.709px;">0rem</span></div>
<div class="ic" style="left:751.3px;top:802.8px;width:17px;height:17px;"><svg viewBox="0 0 17 17" fill="none" stroke="#c4c4c4" stroke-width="1.4" stroke-linecap="round" stroke-linejoin="round"><path d="M8.5 .8V16.2M.8 8.5H16.2"/></svg></div>
<div class="t " id="nv9" style="left:777.8px;top:795.8px;letter-spacing:0.449px;">New variable</div>
<div class="t b th" id="g10" style="left:754.0px;top:844.4px;">h1</div>
<div class="ic" style="left:751.7px;top:897.8px;width:16px;height:16px;"><svg viewBox="0 0 16 16" fill="none" stroke="#e6e6e6" stroke-width="1.6" stroke-linecap="round" stroke-linejoin="round"><path d="M1.3 14.7L14.7 1.3M9.5 1.3H14.7V6.5M1.3 9.5V14.7H6.5"/></svg></div>
<div class="t " id="r11" style="left:777.8px;top:890.4px;letter-spacing:0.666px;">font-size</div>
<div class="chip" id="c11_0" style="left:1020.0px;top:888.3px;width:64.4px;"><span id="c11_0t" class="" style="letter-spacing:0.743px;">5rem</span></div>
<div class="ghost" id="c11_1" style="left:1315.6px;top:888.3px;width:64.4px;"><span id="c11_1t" class="" style="letter-spacing:0.743px;">5rem</span></div>
<div class="ghost" id="c11_2" style="left:1611.2px;top:888.3px;width:64.4px;"><span id="c11_2t" class="" style="letter-spacing:0.743px;">5rem</span></div>
<div class="ic" style="left:750.3px;top:944.7px;width:18px;height:16px;"><svg viewBox="0 0 18 16" fill="none" stroke="#e6e6e6" stroke-width="1.6" stroke-linecap="round" stroke-linejoin="round"><path d="M5.3 11.6L10.2 1.2 15.4 15"/><circle cx="3.5" cy="12.7" r="2.4"/><path d="M5.7 11.4C8.6 9.7 13.4 9.5 17 11.3"/></svg></div>
<div class="t " id="r12" style="left:777.8px;top:937.6px;letter-spacing:0.632px;">font-family</div>
<div class="chip" id="c12_0" style="left:1020.0px;top:935.5px;width:182.8px;"><span id="c12_0t" class="" style="letter-spacing:0.757px;">heading-font-family</span></div>
<div class="ghost" id="c12_1" style="left:1315.6px;top:935.5px;width:182.8px;"><span id="c12_1t" class="" style="letter-spacing:0.757px;">heading-font-family</span></div>
<div class="ghost" id="c12_2" style="left:1611.2px;top:935.5px;width:182.8px;"><span id="c12_2t" class="" style="letter-spacing:0.757px;">heading-font-family</span></div>
<div class="ic" style="left:752.1px;top:992.3px;width:16px;height:16px;"><svg viewBox="0 0 16 16" fill="none" stroke="#e6e6e6" stroke-width="1.6" stroke-linecap="round" stroke-linejoin="round"><path d="M6 1L3.8 15M12.4 1L10.2 15M1.8 5.6H15.2M.8 10.4H14.2"/></svg></div>
<div class="t " id="r13" style="left:777.8px;top:984.9px;letter-spacing:0.777px;">font-weight</div>
<div class="chip" id="c13_0" style="left:1020.0px;top:982.8px;width:189.3px;"><span id="c13_0t" class="" style="letter-spacing:0.851px;">heading-font-weight</span></div>
<div class="ghost" id="c13_1" style="left:1315.6px;top:982.8px;width:189.3px;"><span id="c13_1t" class="" style="letter-spacing:0.851px;">heading-font-weight</span></div>
<div class="ghost" id="c13_2" style="left:1611.2px;top:982.8px;width:189.3px;"><span id="c13_2t" class="" style="letter-spacing:0.851px;">heading-font-weight</span></div>
<div class="ic" style="left:752.1px;top:1039.6px;width:16px;height:16px;"><svg viewBox="0 0 16 16" fill="none" stroke="#e6e6e6" stroke-width="1.6" stroke-linecap="round" stroke-linejoin="round"><path d="M6 1L3.8 15M12.4 1L10.2 15M1.8 5.6H15.2M.8 10.4H14.2"/></svg></div>
<div class="t " id="r14" style="left:777.8px;top:1032.2px;letter-spacing:0.529px;">line-height</div>
<div class="chip" id="c14_0" style="left:1020.0px;top:1030.1px;width:181.8px;"><span id="c14_0t" class="" style="letter-spacing:0.700px;">heading-line-height</span></div>
<div class="ghost" id="c14_1" style="left:1315.6px;top:1030.1px;width:181.8px;"><span id="c14_1t" class="" style="letter-spacing:0.700px;">heading-line-height</span></div>
<div class="ghost" id="c14_2" style="left:1611.2px;top:1030.1px;width:181.8px;"><span id="c14_2t" class="" style="letter-spacing:0.700px;">heading-line-height</span></div>
<div class="ic" style="left:751.7px;top:1086.8px;width:16px;height:16px;"><svg viewBox="0 0 16 16" fill="none" stroke="#e6e6e6" stroke-width="1.6" stroke-linecap="round" stroke-linejoin="round"><path d="M1.3 14.7L14.7 1.3M9.5 1.3H14.7V6.5M1.3 9.5V14.7H6.5"/></svg></div>
<div class="t " id="r15" style="left:777.8px;top:1079.5px;letter-spacing:0.524px;">letter-spacing</div>
<div class="chip" id="c15_0" style="left:1020.0px;top:1077.3px;width:207.6px;"><span id="c15_0t" class="" style="letter-spacing:0.692px;">heading-letter-spacing</span></div>
<div class="ghost" id="c15_1" style="left:1315.6px;top:1077.3px;width:207.6px;"><span id="c15_1t" class="" style="letter-spacing:0.692px;">heading-letter-spacing</span></div>
<div class="ghost" id="c15_2" style="left:1611.2px;top:1077.3px;width:207.6px;"><span id="c15_2t" class="" style="letter-spacing:0.692px;">heading-letter-spacing</span></div>
<div class="ghost" id="c15_3" style="left:1906.8px;top:1077.3px;width:207.6px;"><span id="c15_3t" class="" style="letter-spacing:0.692px;">heading-letter-spacing</span></div>
<div class="ic" style="left:751.7px;top:1134.1px;width:16px;height:16px;"><svg viewBox="0 0 16 16" fill="none" stroke="#e6e6e6" stroke-width="1.6" stroke-linecap="round" stroke-linejoin="round"><path d="M1.3 14.7L14.7 1.3M9.5 1.3H14.7V6.5M1.3 9.5V14.7H6.5"/></svg></div>
<div class="t " id="r16" style="left:777.8px;top:1126.7px;letter-spacing:0.630px;">text-transform</div>
<div class="chip" id="c16_0" style="left:1020.0px;top:1124.6px;width:211.6px;"><span id="c16_0t" class="" style="letter-spacing:0.747px;">heading-text-transform</span></div>
<div class="ghost" id="c16_1" style="left:1315.6px;top:1124.6px;width:211.6px;"><span id="c16_1t" class="" style="letter-spacing:0.747px;">heading-text-transform</span></div>
<div class="ghost" id="c16_2" style="left:1611.2px;top:1124.6px;width:211.6px;"><span id="c16_2t" class="" style="letter-spacing:0.747px;">heading-text-transform</span></div>
<div class="ghost" id="c16_3" style="left:1906.8px;top:1124.6px;width:211.6px;"><span id="c16_3t" class="" style="letter-spacing:0.747px;">heading-text-transform</span></div>
<div class="ic" style="left:751.7px;top:1181.4px;width:16px;height:16px;"><svg viewBox="0 0 16 16" fill="none" stroke="#e6e6e6" stroke-width="1.6" stroke-linecap="round" stroke-linejoin="round"><path d="M1.3 14.7L14.7 1.3M9.5 1.3H14.7V6.5M1.3 9.5V14.7H6.5"/></svg></div>
<div class="t " id="r17" style="left:777.8px;top:1174.0px;letter-spacing:0.560px;">margin-top</div>
<div class="chip" id="c17_0" style="left:1020.0px;top:1171.9px;width:33.1px;"><span id="c17_0t" class="" style="letter-spacing:0px;">5</span></div>
<div class="ghost" id="c17_1" style="left:1315.6px;top:1171.9px;width:33.1px;"><span id="c17_1t" class="" style="letter-spacing:0px;">5</span></div>
<div class="ghost" id="c17_2" style="left:1611.2px;top:1171.9px;width:33.1px;"><span id="c17_2t" class="" style="letter-spacing:0px;">5</span></div>
<div class="ghost" id="c17_3" style="left:1906.8px;top:1171.9px;width:33.1px;"><span id="c17_3t" class="" style="letter-spacing:0px;">5</span></div>
<div class="ic" style="left:751.7px;top:1228.7px;width:16px;height:16px;"><svg viewBox="0 0 16 16" fill="none" stroke="#e6e6e6" stroke-width="1.6" stroke-linecap="round" stroke-linejoin="round"><path d="M1.3 14.7L14.7 1.3M9.5 1.3H14.7V6.5M1.3 9.5V14.7H6.5"/></svg></div>
<div class="t " id="r18" style="left:777.8px;top:1221.3px;letter-spacing:0.599px;">margin-bottom</div>
<div class="chip" id="c18_0" style="left:1020.0px;top:1219.2px;width:33.1px;"><span id="c18_0t" class="" style="letter-spacing:0px;">3</span></div>
<div class="ghost" id="c18_1" style="left:1315.6px;top:1219.2px;width:33.1px;"><span id="c18_1t" class="" style="letter-spacing:0px;">3</span></div>
<div class="ghost" id="c18_2" style="left:1611.2px;top:1219.2px;width:33.1px;"><span id="c18_2t" class="" style="letter-spacing:0px;">3</span></div>
<div class="ghost" id="c18_3" style="left:1906.8px;top:1219.2px;width:33.1px;"><span id="c18_3t" class="" style="letter-spacing:0px;">3</span></div>
<div class="ic" style="left:751.3px;top:1275.5px;width:17px;height:17px;"><svg viewBox="0 0 17 17" fill="none" stroke="#c4c4c4" stroke-width="1.4" stroke-linecap="round" stroke-linejoin="round"><path d="M8.5 .8V16.2M.8 8.5H16.2"/></svg></div>
<div class="t " id="nv19" style="left:777.8px;top:1268.5px;letter-spacing:0.449px;">New variable</div>
<div class="t b th" id="g20" style="left:754.0px;top:1317.1px;">font</div>
<div class="ic" style="left:750.3px;top:1370.2px;width:18px;height:16px;"><svg viewBox="0 0 18 16" fill="none" stroke="#e6e6e6" stroke-width="1.6" stroke-linecap="round" stroke-linejoin="round"><path d="M5.3 11.6L10.2 1.2 15.4 15"/><circle cx="3.5" cy="12.7" r="2.4"/><path d="M5.7 11.4C8.6 9.7 13.4 9.5 17 11.3"/></svg></div>
<div class="t " id="r21" style="left:777.8px;top:1363.1px;letter-spacing:0.538px;">primary-family</div>
<div class="plain" id="c21_0" style="left:1020.0px;top:1361.0px;width:130.6px;"><span id="c21_0t" class="" style="letter-spacing:0.129px;">Fraktion Sans</span></div>
<div class="plain dimv" id="c21_1" style="left:1315.6px;top:1361.0px;width:130.6px;"><span id="c21_1t" class="" style="letter-spacing:0.129px;">Fraktion Sans</span></div>
<div class="plain dimv" id="c21_2" style="left:1611.2px;top:1361.0px;width:130.6px;"><span id="c21_2t" class="" style="letter-spacing:0.129px;">Fraktion Sans</span></div>
<div class="plain dimv" id="c21_3" style="left:1906.8px;top:1361.0px;width:130.6px;"><span id="c21_3t" class="" style="letter-spacing:0.129px;">Fraktion Sans</span></div>
<div class="ic" style="left:752.1px;top:1417.7px;width:16px;height:16px;"><svg viewBox="0 0 16 16" fill="none" stroke="#e6e6e6" stroke-width="1.6" stroke-linecap="round" stroke-linejoin="round"><path d="M6 1L3.8 15M12.4 1L10.2 15M1.8 5.6H15.2M.8 10.4H14.2"/></svg></div>
<div class="t " id="r22" style="left:777.8px;top:1410.3px;letter-spacing:0.491px;">primary-regular</div>
<div class="plain" id="c22_0" style="left:1020.0px;top:1408.2px;width:55.4px;"><span id="c22_0t" class="" style="letter-spacing:1.856px;">400</span></div>
<div class="plain dimv" id="c22_1" style="left:1315.6px;top:1408.2px;width:55.4px;"><span id="c22_1t" class="" style="letter-spacing:1.856px;">400</span></div>
<div class="plain dimv" id="c22_2" style="left:1611.2px;top:1408.2px;width:55.4px;"><span id="c22_2t" class="" style="letter-spacing:1.856px;">400</span></div>
<div class="plain dimv" id="c22_3" style="left:1906.8px;top:1408.2px;width:55.4px;"><span id="c22_3t" class="" style="letter-spacing:1.856px;">400</span></div>
<div id="pop" style="position:absolute;left:1865.5px;top:463.5px;width:354px;height:638.5px;background:#363636;border-radius:5px;box-shadow:0 0 0 1px rgba(0,0,0,.22),0 8px 22px rgba(0,0,0,.5),0 2px 6px rgba(0,0,0,.35);"></div>
<div class="t b" id="pTitle" style="left:1877.4px;top:472.4px;letter-spacing:0.066px;">Variables</div>
<div class="ic" style="left:2186.7px;top:476.3px;width:19px;height:19px;"><svg viewBox="0 0 19 19" fill="none" stroke="#cacaca" stroke-width="1.8" stroke-linecap="round" stroke-linejoin="round"><path d="M8.2 13.6L7 14.8A3 3 0 0 1 2.8 10.6L5 8.4A3 3 0 0 1 8.6 7.9M10.8 5.4L12 4.2A3 3 0 0 1 16.2 8.4L14 10.6A3 3 0 0 1 10.4 11.1" stroke-width="1.9"/><path d="M5.6 1.8L6.3 3.9M1.8 5.6L3.9 6.3M13.4 17.2L12.7 15.1M17.2 13.4L15.1 12.7" stroke-width="1.5"/></svg></div>
<div class="" style="position:absolute;left:1877.0px;top:510.0px;width:330.4px;height:34.4px;box-sizing:border-box;border:1px solid #444444;border-radius:5px;background:#272727;"></div>
<div class="ic" style="left:1886.5px;top:519.7px;width:17px;height:17px;"><svg viewBox="0 0 17 17" fill="none" stroke="#c4c4c4" stroke-width="1.6" stroke-linecap="round" stroke-linejoin="round"><circle cx="7.2" cy="7.2" r="6"/><path d="M11.6 11.6L16 16"/></svg></div>
<div class="t " id="pSearch" style="left:1909.6px;top:512.4px;letter-spacing:0.285px;color:#929292;">Search variables</div>
<div class="btn" style="position:absolute;left:1877.0px;top:557.0px;width:331.0px;height:35.0px;background:#4c4c4c;border-radius:4px;"></div>
<div class="t " id="pAll" style="left:1889.0px;top:559.4px;letter-spacing:0.144px;font-style:italic;color:#eeeeee;">All variables</div>
<div class="ic" style="left:2184.7px;top:572.1px;width:11.4px;height:6.6px;"><svg viewBox="0 0 11.4 6.6" fill="none" stroke="#dedede" stroke-width="1.9" stroke-linecap="round" stroke-linejoin="round"><path d="M1.2 1.2L5.7 5.2 10.2 1.2"/></svg></div>
<div class="hl" style="position:absolute;left:1865.5px;top:603.5px;width:354.0px;height:1.0px;background:#434343;"></div>
<div class="" style="position:absolute;left:1871.0px;top:645.8px;width:330.0px;height:35.6px;background:#464646;border-radius:2px;"></div>
<div class="ic" style="left:1886.4px;top:619.8px;width:16px;height:16px;"><svg viewBox="0 0 16 16" fill="none" stroke="#cdcdcd" stroke-width="1.5" stroke-linecap="round" stroke-linejoin="round"><path d="M1.3 14.7L14.7 1.3M9.5 1.3H14.7V6.5M1.3 9.5V14.7H6.5"/></svg></div>
<div class="t " id="p0" style="left:1918.6px;top:612.5px;color:#f0f0f0;"><span id="pa0" class="" style="letter-spacing:0.609px;">4rem</span><span id="pb0" class="dim pv" style="letter-spacing:0.609px;">4rem</span></div>
<div class="ic" style="left:1886.4px;top:655.3px;width:16px;height:16px;"><svg viewBox="0 0 16 16" fill="none" stroke="#cdcdcd" stroke-width="1.5" stroke-linecap="round" stroke-linejoin="round"><path d="M1.3 14.7L14.7 1.3M9.5 1.3H14.7V6.5M1.3 9.5V14.7H6.5"/></svg></div>
<div class="t " id="p1" style="left:1918.6px;top:648.0px;color:#f0f0f0;"><span id="pa1" class="" style="letter-spacing:0.200px;">4.5rem</span><span id="pb1" class="dim pv" style="letter-spacing:0.200px;">4.5rem</span></div>
<div class="ic" style="left:1886.4px;top:690.7px;width:16px;height:16px;"><svg viewBox="0 0 16 16" fill="none" stroke="#cdcdcd" stroke-width="1.5" stroke-linecap="round" stroke-linejoin="round"><path d="M1.3 14.7L14.7 1.3M9.5 1.3H14.7V6.5M1.3 9.5V14.7H6.5"/></svg></div>
<div class="t " id="p2" style="left:1918.6px;top:683.4px;color:#f0f0f0;"><span id="pa2" class="" style="letter-spacing:0.443px;">5rem</span><span id="pb2" class="dim pv" style="letter-spacing:0.443px;">5rem</span></div>
<div class="ic" style="left:1886.4px;top:726.2px;width:16px;height:16px;"><svg viewBox="0 0 16 16" fill="none" stroke="#cdcdcd" stroke-width="1.5" stroke-linecap="round" stroke-linejoin="round"><path d="M1.3 14.7L14.7 1.3M9.5 1.3H14.7V6.5M1.3 9.5V14.7H6.5"/></svg></div>
<div class="t " id="p3" style="left:1918.6px;top:718.9px;color:#f0f0f0;"><span id="pa3" class="" style="letter-spacing:0.200px;">5.5rem</span><span id="pb3" class="dim pv" style="letter-spacing:0.200px;">5.5rem</span></div>
<div class="ic" style="left:1886.4px;top:761.6px;width:16px;height:16px;"><svg viewBox="0 0 16 16" fill="none" stroke="#cdcdcd" stroke-width="1.5" stroke-linecap="round" stroke-linejoin="round"><path d="M1.3 14.7L14.7 1.3M9.5 1.3H14.7V6.5M1.3 9.5V14.7H6.5"/></svg></div>
<div class="t " id="p4" style="left:1918.6px;top:754.3px;color:#f0f0f0;"><span id="pa4" class="" style="letter-spacing:0.543px;">6rem</span><span id="pb4" class="dim pv" style="letter-spacing:0.543px;">6rem</span></div>
<div class="ic" style="left:1886.4px;top:797.1px;width:16px;height:16px;"><svg viewBox="0 0 16 16" fill="none" stroke="#cdcdcd" stroke-width="1.5" stroke-linecap="round" stroke-linejoin="round"><path d="M1.3 14.7L14.7 1.3M9.5 1.3H14.7V6.5M1.3 9.5V14.7H6.5"/></svg></div>
<div class="t " id="p5" style="left:1918.6px;top:789.8px;color:#f0f0f0;"><span id="pa5" class="" style="letter-spacing:0.220px;">6.5rem</span><span id="pb5" class="dim pv" style="letter-spacing:0.220px;">6.5rem</span></div>
<div class="ic" style="left:1886.4px;top:832.6px;width:16px;height:16px;"><svg viewBox="0 0 16 16" fill="none" stroke="#cdcdcd" stroke-width="1.5" stroke-linecap="round" stroke-linejoin="round"><path d="M1.3 14.7L14.7 1.3M9.5 1.3H14.7V6.5M1.3 9.5V14.7H6.5"/></svg></div>
<div class="t " id="p6" style="left:1918.6px;top:825.3px;color:#f0f0f0;"><span id="pa6" class="" style="letter-spacing:0.376px;">7rem</span><span id="pb6" class="dim pv" style="letter-spacing:0.376px;">7rem</span></div>
<div class="ic" style="left:1886.4px;top:868.0px;width:16px;height:16px;"><svg viewBox="0 0 16 16" fill="none" stroke="#cdcdcd" stroke-width="1.5" stroke-linecap="round" stroke-linejoin="round"><path d="M1.3 14.7L14.7 1.3M9.5 1.3H14.7V6.5M1.3 9.5V14.7H6.5"/></svg></div>
<div class="t " id="p7" style="left:1918.6px;top:860.7px;color:#f0f0f0;"><span id="pa7" class="" style="letter-spacing:-0.220px;">7.5rem</span><span id="pb7" class="dim pv" style="letter-spacing:-0.220px;">7.5rem</span></div>
<div class="ic" style="left:1886.4px;top:903.5px;width:16px;height:16px;"><svg viewBox="0 0 16 16" fill="none" stroke="#cdcdcd" stroke-width="1.5" stroke-linecap="round" stroke-linejoin="round"><path d="M1.3 14.7L14.7 1.3M9.5 1.3H14.7V6.5M1.3 9.5V14.7H6.5"/></svg></div>
<div class="t " id="p8" style="left:1918.6px;top:896.2px;color:#f0f0f0;"><span id="pa8" class="" style="letter-spacing:0.543px;">8rem</span><span id="pb8" class="dim pv" style="letter-spacing:0.543px;">8rem</span></div>
<div class="ic" style="left:1886.4px;top:938.9px;width:16px;height:16px;"><svg viewBox="0 0 16 16" fill="none" stroke="#cdcdcd" stroke-width="1.5" stroke-linecap="round" stroke-linejoin="round"><path d="M1.3 14.7L14.7 1.3M9.5 1.3H14.7V6.5M1.3 9.5V14.7H6.5"/></svg></div>
<div class="t " id="p9" style="left:1918.6px;top:931.6px;color:#f0f0f0;"><span id="pa9" class="" style="letter-spacing:0.220px;">8.5rem</span><span id="pb9" class="dim pv" style="letter-spacing:0.220px;">8.5rem</span></div>
<div class="ic" style="left:1886.4px;top:974.4px;width:16px;height:16px;"><svg viewBox="0 0 16 16" fill="none" stroke="#cdcdcd" stroke-width="1.5" stroke-linecap="round" stroke-linejoin="round"><path d="M1.3 14.7L14.7 1.3M9.5 1.3H14.7V6.5M1.3 9.5V14.7H6.5"/></svg></div>
<div class="t " id="p10" style="left:1918.6px;top:967.1px;color:#f0f0f0;"><span id="pa10" class="" style="letter-spacing:0.543px;">9rem</span><span id="pb10" class="dim pv" style="letter-spacing:0.543px;">9rem</span></div>
<div class="ic" style="left:1886.4px;top:1009.9px;width:16px;height:16px;"><svg viewBox="0 0 16 16" fill="none" stroke="#cdcdcd" stroke-width="1.5" stroke-linecap="round" stroke-linejoin="round"><path d="M1.3 14.7L14.7 1.3M9.5 1.3H14.7V6.5M1.3 9.5V14.7H6.5"/></svg></div>
<div class="t " id="p11" style="left:1918.6px;top:1002.6px;color:#f0f0f0;"><span id="pa11" class="" style="letter-spacing:0.220px;">9.5rem</span><span id="pb11" class="dim pv" style="letter-spacing:0.220px;">9.5rem</span></div>
<div class="ic" style="left:1886.4px;top:1045.3px;width:16px;height:16px;"><svg viewBox="0 0 16 16" fill="none" stroke="#cdcdcd" stroke-width="1.5" stroke-linecap="round" stroke-linejoin="round"><path d="M1.3 14.7L14.7 1.3M9.5 1.3H14.7V6.5M1.3 9.5V14.7H6.5"/></svg></div>
<div class="t " id="p12" style="left:1918.6px;top:1038.0px;color:#f0f0f0;"><span id="pa12" class="" style="letter-spacing:0.045px;">10rem</span><span id="pb12" class="dim pv" style="letter-spacing:0.045px;">10rem</span></div>
<div style="position:absolute;left:1866px;top:1070px;width:340px;height:32px;overflow:hidden;">
<div class="ic" style="left:20.4px;top:10.8px;width:16px;height:16px;"><svg viewBox="0 0 16 16" fill="none" stroke="#cdcdcd" stroke-width="1.5" stroke-linecap="round" stroke-linejoin="round"><path d="M1.3 14.7L14.7 1.3M9.5 1.3H14.7V6.5M1.3 9.5V14.7H6.5"/></svg></div>
<div class="t" style="left:52.6px;top:3.5px;color:#f0f0f0;"><span id="pa13" class="" style="letter-spacing:-0.288px;">11rem</span><span id="pb13" class="dim pv" style="letter-spacing:-0.288px;">11rem</span></div>
</div>
<div class="" style="position:absolute;left:2209.0px;top:942.0px;width:8.0px;height:35.5px;background:#8b8b8b;border-radius:4px;"></div>
<div class="ic" style="left:2016.0px;top:650.0px;width:26px;height:38px;"><svg viewBox="0 0 26 38"><path d="M2.6 4.2V30L7.6 25.4 13.1 35.3 17.6 33.1 12.6 23.2 21.6 22.5Z" fill="#050505" stroke="#ffffff" stroke-width="1.9" stroke-linejoin="miter"/></svg></div>
</div>
</body></html>
